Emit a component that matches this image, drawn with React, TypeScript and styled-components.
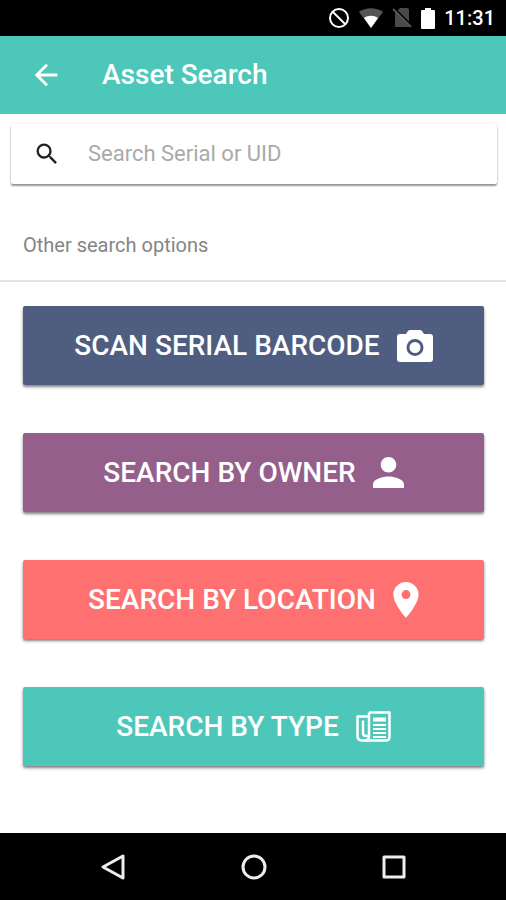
import React from "react";
import styled, { createGlobalStyle } from "styled-components";

const GlobalStyle = createGlobalStyle`
  *, *::before, *::after { box-sizing: border-box; }
  body { margin: 0; background: #fff; font-family: Roboto, "Open Sans", sans-serif; }
  button, input { font-family: inherit; }
`;

const Screen = styled.div`
  display: flex;
  flex-direction: column;
  min-height: 100vh;
  background: #fff;
`;

const StatusBar = styled.div`
  display: flex;
  align-items: center;
  justify-content: flex-end;
  height: 36px;
  padding: 0 11px;
  gap: 9px;
  background: #000;
  color: #fff;
`;

const Clock = styled.time`
  font-size: 20px;
  line-height: 24px;
  font-weight: 500;
`;

const AppBar = styled.header`
  display: flex;
  align-items: center;
  gap: 39px;
  height: 78px;
  padding: 0 29px;
  background: #4dc7ba;
  color: #fff;
`;

const IconButton = styled.button`
  display: flex;
  padding: 0;
  border: 0;
  background: none;
  color: inherit;
  cursor: pointer;
`;

const Title = styled.h1`
  margin: 0;
  font-size: 28px;
  line-height: 32px;
  font-weight: 500;
`;

const SearchCard = styled.label`
  display: flex;
  align-items: center;
  gap: 27px;
  height: 60px;
  margin: 10px 9px 0 11px;
  padding: 0 22px;
  border-radius: 2px;
  background: #fff;
  color: #222;
  box-shadow: 0 2px 2px rgba(0, 0, 0, 0.4), 0 0 3px rgba(0, 0, 0, 0.1);
`;

const SearchInput = styled.input`
  flex: 1;
  min-width: 0;
  padding: 0;
  border: 0;
  outline: 0;
  background: none;
  font-size: 22px;
  line-height: 28px;
  color: #333;
  &::placeholder { color: #aaa; opacity: 1; }
`;

const SectionTitle = styled.h2`
  margin: 28px 0 0;
  padding: 19px 23px 21px;
  border-bottom: 2px solid #e2e2e2;
  font-size: 20px;
  line-height: 28px;
  font-weight: 400;
  color: #858585;
`;

const Options = styled.main`
  flex: 1;
  display: flex;
  flex-direction: column;
  gap: 48px;
  padding: 24px 22px 48px 23px;
`;

const OptionButton = styled.button<{ $color: string }>`
  display: flex;
  align-items: center;
  justify-content: center;
  gap: 17px;
  height: 79px;
  padding: 0 16px;
  border: 0;
  border-radius: 2px;
  background: ${(p) => p.$color};
  box-shadow: 0 2px 3px rgba(0, 0, 0, 0.5);
  color: #fff;
  font-size: 28px;
  line-height: 36px;
  font-weight: 500;
  cursor: pointer;
`;

const NavBar = styled.nav`
  display: flex;
  align-items: center;
  justify-content: space-between;
  height: 67px;
  padding: 0 96px 0 97px;
  background: #000;
  color: #eee;
`;

const CameraIcon = () => (
  <svg width="36" height="32" viewBox="0 0 36 32" fill="currentColor" aria-hidden="true">
    <path fillRule="evenodd" d="M13 0h10q1 0 2 1l2 3h6q3 0 3 3v22q0 3-3 3H3q-3 0-3-3V7q0-3 3-3h6l2-3q1-1 2-1Zm5 9a8.500 8.500 0 1 0 0 17 8.500 8.500 0 0 0 0-17Zm0 3a5.500 5.500 0 1 1 0 11 5.500 5.500 0 0 1 0-11Z" />
  </svg>
);

const PersonIcon = () => (
  <svg width="31" height="31" viewBox="4 4 16 16" fill="currentColor" aria-hidden="true">
    <path d="M12 12c2.210 0 4-1.790 4-4s-1.790-4-4-4-4 1.790-4 4 1.790 4 4 4Zm0 2c-2.670 0-8 1.340-8 4v2h16v-2c0-2.660-5.330-4-8-4Z" />
  </svg>
);

const PinIcon = () => (
  <svg width="26" height="36" viewBox="5 2 14 20" fill="currentColor" aria-hidden="true">
    <path d="M12 2C8.130 2 5 5.130 5 9c0 5.250 7 13 7 13s7-7.750 7-13c0-3.870-3.130-7-7-7Zm0 9.500a2.500 2.500 0 1 1 0-5 2.500 2.500 0 0 1 0 5Z" />
  </svg>
);

const PaperIcon = () => (
  <svg width="35" height="31" viewBox="0 0 35 31" fill="none" stroke="currentColor" strokeWidth="2.500" strokeLinejoin="round" aria-hidden="true">
    <path d="M13 1.500h20.500V26q0 3.500-3.500 3.500H6.500Q1.500 29.500 1.500 25V5.500H13" />
    <path d="M13 1.500V25q0 4.500-4 4.500M7 9.500V22q0 3 3 3h3" />
    <path strokeWidth="4" d="M17 8.500h13" />
    <path strokeWidth="2" d="M17 14h13M17 18h13M17 22h13M17 26h13" />
  </svg>
);

const options = [
  { label: "SCAN SERIAL BARCODE", color: "#4f5e80", Icon: CameraIcon },
  { label: "SEARCH BY OWNER", color: "#955f8b", Icon: PersonIcon },
  { label: "SEARCH BY LOCATION", color: "#ff7070", Icon: PinIcon },
  { label: "SEARCH BY TYPE", color: "#4dc7ba", Icon: PaperIcon },
];

const StatusIcons = () => (
  <>
    <svg width="22" height="22" viewBox="0 0 22 22" fill="none" stroke="#fff" strokeWidth="2" aria-hidden="true">
      <circle cx="11" cy="11" r="9" />
      <path d="m5 5 12 12" />
    </svg>
    <svg width="24" height="20" viewBox="0 0 24 20" aria-hidden="true">
      <path fill="#555" d="M0 4C7-1 17-1 24 4L12 20Z" />
      <path fill="#fff" d="M5 10c4-3 10-3 14 0l-7 10Z" />
    </svg>
    <svg width="20" height="20" viewBox="0 0 20 20" aria-hidden="true">
      <path fill="#4a4a4a" d="M8 0h7q2 0 2 2v17H3V5Z" />
      <path stroke="#000" strokeWidth="2" d="m2 0 18 18" />
      <path stroke="#555" strokeWidth="2" d="m1 1 18 18" />
    </svg>
    <svg width="14" height="21" viewBox="0 0 14 21" fill="#fff" aria-hidden="true">
      <path d="M4 0h6v2h3q1 0 1 1v17q0 1-1 1H1q-1 0-1-1V3q0-1 1-1h3Z" />
    </svg>
  </>
);

export default function App() {
  return (
    <>
      <GlobalStyle />
      <Screen>
        <StatusBar>
          <StatusIcons />
          <Clock>11:31</Clock>
        </StatusBar>
        <AppBar>
          <IconButton aria-label="Back">
            <svg width="34" height="34" viewBox="0 0 24 24" fill="currentColor" aria-hidden="true">
              <path d="M20 11H7.830l5.590-5.590L12 4l-8 8 8 8 1.410-1.410L7.830 13H20v-2Z" />
            </svg>
          </IconButton>
          <Title>Asset Search</Title>
        </AppBar>
        <SearchCard>
          <svg width="28" height="28" viewBox="0 0 24 24" fill="currentColor" aria-hidden="true">
            <path d="M15.500 14h-.79l-.28-.27A6.470 6.470 0 0 0 16 9.500 6.500 6.500 0 1 0 9.500 16c1.610 0 3.090-.59 4.230-1.570l.27.28v.79l5 4.990L20.490 19l-4.990-5Zm-6 0a4.500 4.500 0 1 1 0-9 4.500 4.500 0 0 1 0 9Z" />
          </svg>
          <SearchInput type="search" aria-label="Search Serial or UID" placeholder="Search Serial or UID" />
        </SearchCard>
        <SectionTitle>Other search options</SectionTitle>
        <Options>
          {options.map(({ label, color, Icon }) => (
            <OptionButton key={label} $color={color}>
              <span>{label}</span>
              <Icon />
            </OptionButton>
          ))}
        </Options>
        <NavBar>
          <IconButton aria-label="Back">
            <svg width="32" height="32" viewBox="0 0 32 32" fill="none" stroke="currentColor" strokeWidth="3" strokeLinejoin="round" aria-hidden="true">
              <path d="M26 5v22L6 16Z" />
            </svg>
          </IconButton>
          <IconButton aria-label="Home">
            <svg width="32" height="32" viewBox="0 0 32 32" fill="none" stroke="currentColor" strokeWidth="3" aria-hidden="true">
              <circle cx="16" cy="16" r="11" />
            </svg>
          </IconButton>
          <IconButton aria-label="Recent apps">
            <svg width="32" height="32" viewBox="0 0 32 32" fill="none" stroke="currentColor" strokeWidth="3" strokeLinejoin="round" aria-hidden="true">
              <rect x="6" y="6" width="20" height="20" />
            </svg>
          </IconButton>
        </NavBar>
      </Screen>
    </>
  );
}
